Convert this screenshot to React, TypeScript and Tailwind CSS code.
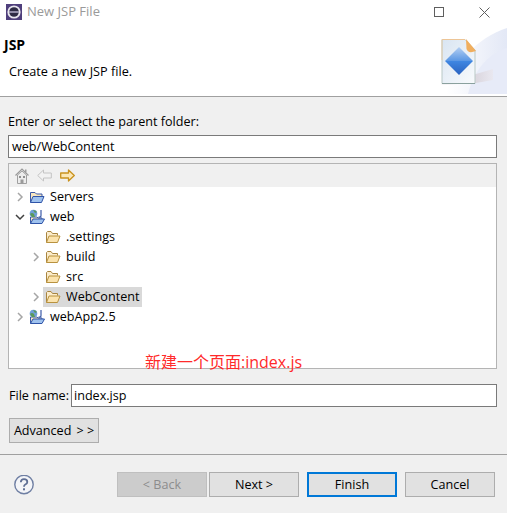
import React from 'react';

const font = { fontFamily: '"Open Sans", "Noto Sans CJK SC", sans-serif' };

function AppIcon() {
  return (
    <svg width="16" height="16" viewBox="0 0 16 16" className="shrink-0">
      <rect width="16" height="16" fill="#4f3f7c" />
      <circle cx="8" cy="8" r="6.6" fill="#e8e6ee" />
      <circle cx="8" cy="8" r="4.8" fill="#2e2b45" />
      <rect x="3" y="7.2" width="10" height="1.6" fill="#a9a5c0" />
    </svg>
  );
}

function JspBanner() {
  return (
    <svg width="67" height="66" viewBox="0 0 67 66" className="shrink-0">
      <defs>
        <linearGradient id="page" x1="0" y1="0" x2="1" y2="1">
          <stop offset="0" stopColor="#d9e5f2" />
          <stop offset="1" stopColor="#f8fafc" />
        </linearGradient>
        <linearGradient id="swoosh" x1="0" y1="0" x2="1" y2="0">
          <stop offset="0" stopColor="#ffffff" />
          <stop offset="1" stopColor="#e3e8f6" />
        </linearGradient>
        <linearGradient id="shadow" x1="0" y1="0" x2="1" y2="0">
          <stop offset="0" stopColor="#f5f3f6" />
          <stop offset="0.7" stopColor="#dcd8e0" />
          <stop offset="1" stopColor="#e9e8f0" />
        </linearGradient>
        <linearGradient id="gemTop" x1="0" y1="0" x2="0" y2="1">
          <stop offset="0" stopColor="#b4cff2" />
          <stop offset="1" stopColor="#5a97e4" />
        </linearGradient>
        <linearGradient id="gemBottom" x1="0" y1="0" x2="0" y2="1">
          <stop offset="0" stopColor="#3f87e2" />
          <stop offset="1" stopColor="#2a62c0" />
        </linearGradient>
      </defs>
      <path d="M6 66 C 14 36 36 10 67 0 L67 66 Z" fill="url(#swoosh)" />
      <path d="M28 66 C 34 42 48 26 67 20 L67 66 Z" fill="#e7ebf8" />
      <path d="M0 57 L36 46 L53 41 V52 L36 55 Z" fill="url(#shadow)" />
      <path d="M2 11.500 H25 L35 22 V55.500 H2 Z" fill="url(#page)" stroke="#b9c8c6" />
      <path d="M2 55.500 H35" stroke="#8aa19e" fill="none" />
      <path d="M2 11.500 H25" stroke="#edc596" fill="none" />
      <path d="M2 11.500 V32" stroke="#e6cfae" fill="none" />
      <path d="M26 11 L36 23 Q28 26 26.500 21 Z" fill="#f0ae5e" />
      <path d="M5 33 L19 19 L33 33 H5 Z" fill="url(#gemTop)" />
      <path d="M5 33 L19 47 L33 33 H5 Z" fill="url(#gemBottom)" />
    </svg>
  );
}

function Chevron({ open, dark }: { open?: boolean; dark?: boolean }) {
  return (
    <svg width="10" height="10" viewBox="0 0 10 10" className="shrink-0">
      <path
        d={open ? 'M1 3 L5 7 L9 3' : 'M3 1 L7 5 L3 9'}
        fill="none"
        stroke={dark ? '#404040' : '#a6a6a6'}
        strokeWidth="1.500"
      />
    </svg>
  );
}

function Folder() {
  return (
    <svg width="16" height="14" viewBox="0 0 16 14" className="shrink-0">
      <path d="M1.500 12.500 V2.500 L2.500 1.500 H6 L7.500 3.500 H12.500 V5.500" fill="#fbeccb" stroke="#a9853f" />
      <path d="M1.500 12.500 L4 6 H15 L12.500 12.500 Z" fill="#fbe3ad" stroke="#b8923f" />
    </svg>
  );
}

function BlueFolder() {
  return (
    <svg width="16" height="14" viewBox="0 0 16 14" className="shrink-0">
      <path d="M1.500 12.500 V2.500 H6 L7.500 4 H13 V6" fill="#f7e6bf" stroke="#3c5ba8" />
      <path d="M1.500 12.500 L4 6.500 H15 L12.500 12.500 Z" fill="#9fc2ee" stroke="#2f54a8" />
    </svg>
  );
}

function ProjectIcon() {
  return (
    <svg width="16" height="16" viewBox="0 0 16 16" className="shrink-0">
      <path d="M1.500 14.500 V8 H8 L9 9 H13 V10" fill="#f7e6bf" stroke="#3c5ba8" />
      <path d="M1.500 14.500 L4 10 H15.500 L13 14.500 Z" fill="#9fc2ee" stroke="#2f54a8" />
      <circle cx="4.500" cy="4.500" r="3.800" fill="#6f9fd8" />
      <path d="M1 5 Q3 3 5 5 L6 8 L3 8 Z" fill="#5b9a5a" />
      <path d="M4 1 Q6 1 8 3 L6 4 Z" fill="#5b9a5a" />
      <path d="M12 1 V6.500 Q12 8.500 9.500 8" fill="none" stroke="#3c5ba8" strokeWidth="1.200" />
    </svg>
  );
}

function HomeIcon() {
  return (
    <svg width="14" height="16" viewBox="0 0 14 16" className="shrink-0">
      <path d="M0.500 7.500 L7 1 L13.500 7.500" fill="none" stroke="#9a9a9a" strokeWidth="1.200" />
      <path d="M2.500 7 V15.500 H11.500 V7 L7 3 Z" fill="#ececec" stroke="#a0a0a0" />
      <rect x="4" y="8" width="2" height="2" fill="#8f8f8f" />
      <rect x="8" y="8" width="2" height="2" fill="#8f8f8f" />
      <rect x="5.500" y="11.500" width="3" height="4" fill="#9a9a9a" />
      <rect x="10" y="1.500" width="1.500" height="3" fill="#a0a0a0" />
    </svg>
  );
}

function NavArrow({ back }: { back?: boolean }) {
  return (
    <svg width="15" height="13" viewBox="0 0 15 13" className="shrink-0">
      {back ? (
        <path d="M0.700 6.500 L6.500 1 V4 H14.300 V9 H6.500 V12 Z" fill="#f2f2f2" stroke="#c4c4c4" strokeLinejoin="round" />
      ) : (
        <path d="M14.300 6.500 L8.500 1 V4 H0.700 V9 H8.500 V12 Z" fill="#fbe7b5" stroke="#c9921e" strokeWidth="1.300" strokeLinejoin="round" />
      )}
    </svg>
  );
}

type RowProps = {
  label: string;
  depth: 0 | 1;
  chevron?: 'open' | 'closed';
  icon: React.ReactNode;
  selected?: boolean;
};

function TreeRow({ label, depth, chevron, icon, selected }: RowProps) {
  return (
    <div className={`flex h-5 items-center ${depth === 1 ? 'pl-[21px]' : 'pl-[5px]'}`}>
      <div className="flex w-[13px] shrink-0 justify-center pr-[1px]">
        {chevron && <Chevron open={chevron === 'open'} dark={chevron === 'open'} />}
      </div>
      <div className={`flex h-5 items-center gap-[5px] pr-[3px] pl-[2px] ${selected ? 'bg-[#d9d9d9]' : ''}`}>
        {icon}
        <span className="text-[12.6px] text-black">{label}</span>
      </div>
    </div>
  );
}

function Button({ children, primary, disabled }: { children: React.ReactNode; primary?: boolean; disabled?: boolean }) {
  let tone = 'border border-[#adadad] bg-[#e1e1e1] text-black';
  if (primary) tone = 'border-2 border-[#0078d7] bg-[#e1e1e1] text-black';
  if (disabled) tone = 'border border-[#bfbfbf] bg-[#cccccc] text-[#8c8c8c]';
  return (
    <div className={`flex h-[25px] w-[90px] items-center justify-center pt-[1px] text-[12.6px] ${tone}`}>
      {children}
    </div>
  );
}

export default function App() {
  return (
    <div className="relative flex h-[513px] w-[507px] flex-col overflow-hidden bg-[#f0f0f0]" style={font}>
      {/* banner */}
      <div className="relative h-[97px] shrink-0 border-b border-[#a0a0a0] bg-white">
        <div className="flex h-[24px] items-center pl-[6px]">
          <AppIcon />
          <span className="ml-[5px] text-[13px] text-[#9a9a9a]">New JSP File</span>
          <div className="ml-auto flex items-center gap-[35px] pr-[17px]">
            <div className="h-[10px] w-[10px] border border-[#5f5f5f]" />
            <svg width="11" height="11" viewBox="0 0 11 11">
              <path d="M0.500 0.500 L10.500 10.500 M10.500 0.500 L0.500 10.500" stroke="#5f5f5f" />
            </svg>
          </div>
        </div>
        <div className="mt-[12px] pl-[4px] text-[14px] leading-[18px] font-bold text-black">JSP</div>
        <div className="mt-[8px] pl-[9px] text-[12.7px] leading-[18px] text-black">Create a new JSP file.</div>
        <div className="absolute right-0 bottom-[2px]">
          <JspBanner />
        </div>
      </div>

      {/* parent folder */}
      <div className="mt-[16px] pl-[8px] text-[12.6px] leading-[18px] text-black">Enter or select the parent folder:</div>
      <div className="mx-[8px] mt-[4px] mr-[10px] flex h-[23px] items-center border border-[#7a7a7a] bg-white pt-[1px] pl-[3px] text-[12.6px] text-black">
        web/WebContent
      </div>

      {/* tree */}
      <div className="mx-[8px] mt-[5px] mr-[10px] h-[206px] border border-[#b4b4b4] bg-white">
        <div className="flex h-[23px] items-center gap-[8px] bg-[#f0f0f0] pl-[6px]">
          <HomeIcon />
          <NavArrow back />
          <NavArrow />
        </div>
        <div>
          <TreeRow label="Servers" depth={0} chevron="closed" icon={<BlueFolder />} />
          <TreeRow label="web" depth={0} chevron="open" icon={<ProjectIcon />} />
          <TreeRow label=".settings" depth={1} icon={<Folder />} />
          <TreeRow label="build" depth={1} chevron="closed" icon={<Folder />} />
          <TreeRow label="src" depth={1} icon={<Folder />} />
          <TreeRow label="WebContent" depth={1} chevron="closed" icon={<Folder />} selected />
          <TreeRow label="webApp2.5" depth={0} chevron="closed" icon={<ProjectIcon />} />
        </div>
      </div>

      {/* file name */}
      <div className="mt-[15px] mr-[10px] flex items-center pl-[9px]">
        <span className="w-[62px] pt-[1px] text-[12.6px] text-black">File name:</span>
        <div className="flex h-[23px] flex-1 items-center border border-[#7a7a7a] bg-white pt-[1px] pl-[2px] text-[12.6px] text-black">
          index.jsp
        </div>
      </div>

      <div className="mt-[11px] ml-[9px] flex h-[25px] w-[90px] items-center justify-center gap-[5px] border border-[#adadad] bg-[#e1e1e1] pt-[1px] text-[12.6px] text-black">
        <span>Advanced</span>
        <span>&gt; &gt;</span>
      </div>

      <div className="mt-[11px] h-[1px] bg-[#a0a0a0]" />

      {/* footer */}
      <div className="mt-[17px] flex items-center pr-[12px] pl-[14px]">
        <svg width="20" height="20" viewBox="0 0.500 20 20" className="shrink-0">
          <circle cx="10" cy="10" r="9.200" fill="#f4f5f8" stroke="#6f7fa3" strokeWidth="1.400" />
          <path d="M6.800 7.800 Q7 4.600 10 4.600 Q13.300 4.600 13.300 7.400 Q13.300 9 11.300 10 Q10 10.700 10 12.300" fill="none" stroke="#5f6f95" strokeWidth="1.800" />
          <rect x="9" y="13.800" width="2" height="2" fill="#5f6f95" />
        </svg>
        <div className="ml-auto flex">
          <Button disabled>&lt; Back</Button>
          <div className="w-[2px]" />
          <Button>Next &gt;</Button>
          <div className="w-[8px]" />
          <Button primary>Finish</Button>
          <div className="w-[8px]" />
          <Button>Cancel</Button>
        </div>
      </div>

      {/* red annotation painted over the screenshot */}
      <div className="absolute top-[351px] left-[145px] text-[16px] leading-[22px] whitespace-nowrap text-[#ff2a2a]">
        新建一个页面:index.js
      </div>
    </div>
  );
}
